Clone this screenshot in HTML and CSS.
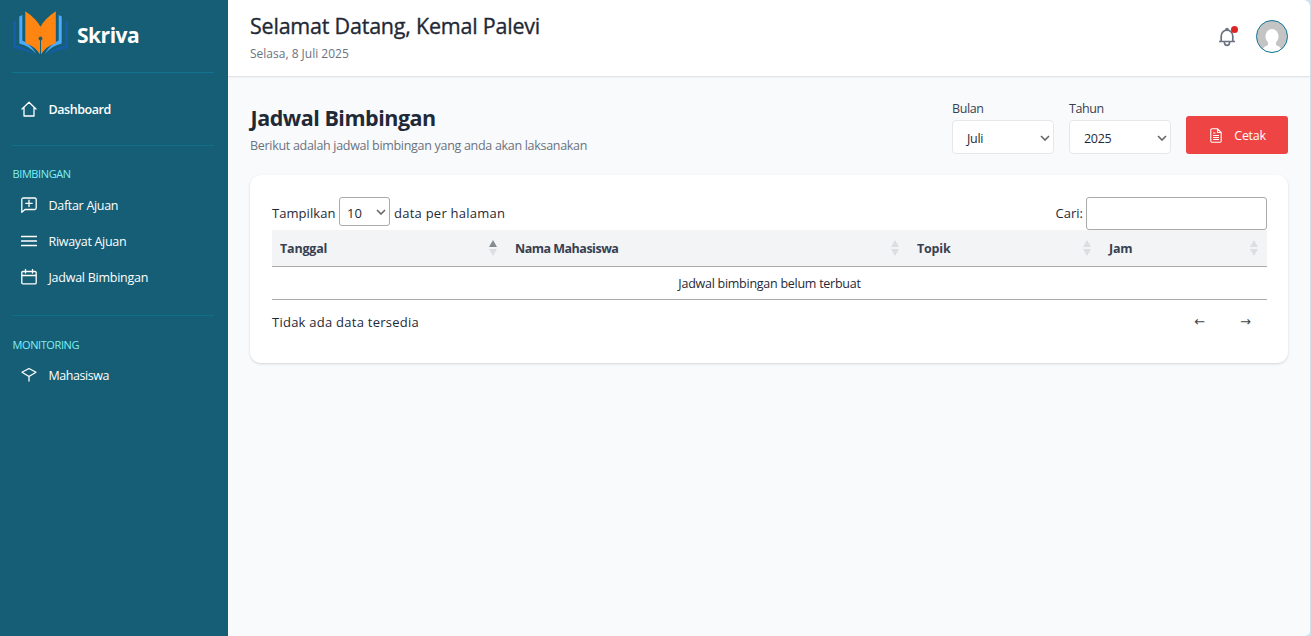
FILE: index.html
```html
<!DOCTYPE html>
<html lang="id">
<head>
<meta charset="utf-8">
<title>Skriva - Jadwal Bimbingan</title>
<link rel="stylesheet" href="styles.css">
</head>
<body>
<div class="app">
  <aside class="sidebar">
    <div class="brand">
      <svg class="logo" width="56" height="48" viewBox="0 0 56 48">
        <path fill="#155da5" d="M0 11h3v24.500q10 1 19 10.500Q12 39.500 0 38.500zM55 11h-3v24.500q-10 1-19 10.500 10-6.500 22-7.500z"/>
        <path fill="#4da9fb" d="M6.300 6.500l3-1.500V30.500q8 3 14 13.500-7.500-8.500-17-10.500zM48.700 6.500l-3-1.500V30.500q-8 3-14 13.500 7.500-8.500 17-10.500z"/>
        <path fill="#ff8512" d="M12.300 1.300Q23 8.500 27.500 16.800 32 8.500 42.800 1.300V33.200Q33 36 27.500 45 22 36 12.300 33.200z"/>
        <circle cx="27.500" cy="28.500" r="1.900" fill="#155e75"/>
        <path d="M27.500 28.500V45" stroke="#155e75" stroke-width="1"/>
      </svg>
      <span class="brand-name">Skriva</span>
    </div>
    <nav class="nav home-nav">
      <a class="nav-item active">
        <svg class="icon" viewBox="0 0 16 16"><path d="M1 8l7-6.800L15 8M3 6.500V15h10V6.500"/></svg>
        <span class="t-dashboard">Dashboard</span>
      </a>
    </nav>
    <nav class="nav group">
      <h3 class="t-bimbingan">BIMBINGAN</h3>
      <a class="nav-item">
        <svg class="icon" viewBox="0 0 16 16"><path d="M.8 15.300V2.500q0-1.500 1.500-1.500h11.400q1.500 0 1.500 1.500v8.500q0 1.500-1.500 1.500H4zM8 3.200v6.300M4.800 6.300h6.400"/></svg>
        <span class="t-daftar">Daftar Ajuan</span>
      </a>
      <a class="nav-item">
        <svg class="icon" viewBox="0 0 16 16"><path d="M.5 3.500h15M.5 8h15M.5 12.500h15"/></svg>
        <span class="t-riwayat">Riwayat Ajuan</span>
      </a>
      <a class="nav-item">
        <svg class="icon" viewBox="0 0 16 16"><path d="M2 2.500h12q1.200 0 1.200 1.200v10q0 1.200-1.200 1.200H2q-1.200 0-1.200-1.200v-10Q.8 2.500 2 2.500zM.8 6.500h14.400M4.500.5v3.500M11.500.5v3.500"/></svg>
        <span class="t-jadwal">Jadwal Bimbingan</span>
      </a>
    </nav>
    <nav class="nav group">
      <h3 class="t-monitoring">MONITORING</h3>
      <a class="nav-item">
        <svg class="icon" viewBox="0 0 16 16"><path d="M8 1.500L15 5.300 8 9.500 1 5.300zM8 9.500V14"/></svg>
        <span class="t-mahasiswa">Mahasiswa</span>
      </a>
    </nav>
  </aside>
  <div class="main">
    <header class="topbar">
      <div>
        <h1><span class="t-welcome">Selamat Datang, Kemal Palevi</span></h1>
        <p class="date"><span class="t-date">Selasa, 8 Juli 2025</span></p>
      </div>
      <div class="user">
        <span class="bell">
          <svg width="18" height="20" viewBox="0 0 18 20" fill="none" stroke="#6b7280" stroke-width="1.700"><path d="M1 14.500h16M3.200 14.500V9a5.800 5.800 0 0 1 11.600 0v5.500M6.500 15v.8a2.500 2.500 0 0 0 5 0V15M8 2.500a1 1 0 0 1 2 0"/></svg>
          <i class="dot"></i>
        </span>
        <svg class="avatar" width="32" height="33" viewBox="0 0 32 33">
          <defs><clipPath id="face"><ellipse cx="16" cy="16.500" rx="15.500" ry="16"/></clipPath></defs>
          <ellipse cx="16" cy="16.500" rx="15.500" ry="16" fill="#c4c4c4"/>
          <g clip-path="url(#face)" fill="#fff"><ellipse cx="16" cy="16.500" rx="6.500" ry="7.500"/><path d="M12 22v3q-6 2-6 8h20q0-6-6-8v-3z"/></g>
          <ellipse cx="16" cy="16.500" rx="15.500" ry="16" fill="none" stroke="#0e7490"/>
        </svg>
      </div>
    </header>
    <main class="content">
      <section class="page-head">
        <div class="page-title">
          <h2><span class="t-title">Jadwal Bimbingan</span></h2>
          <p><span class="t-sub">Berikut adalah jadwal bimbingan yang anda akan laksanakan</span></p>
        </div>
        <div class="filters">
          <label class="field"><span class="t-bulan">Bulan</span>
            <span class="select"><span class="t-juli">Juli</span><svg class="chev" viewBox="0 0 10 6"><path d="M1 1l4 4 4-4"/></svg></span>
          </label>
          <label class="field"><span class="t-tahun">Tahun</span>
            <span class="select"><span class="t-2025">2025</span><svg class="chev" viewBox="0 0 10 6"><path d="M1 1l4 4 4-4"/></svg></span>
          </label>
          <button class="print">
            <svg width="12" height="15" viewBox="0 0 12 15" fill="none" stroke="#fff" stroke-width="1.100"><path d="M7.500.8H2Q.8.800.8 2v11q0 1.200 1.200 1.200h8q1.200 0 1.200-1.200V4.500zM7.500.8v3.700h3.700M3 5h2.500M3 7.500h6M3 9.500h6M3 11.500h6"/></svg>
            <span class="t-cetak">Cetak</span>
          </button>
        </div>
      </section>
      <section class="card">
        <div class="table-tools">
          <div class="length"><span class="t-tampil">Tampilkan</span><span class="select small"><span class="t-10">10</span><svg class="chev" viewBox="0 0 10 6"><path d="M1 1l4 4 4-4"/></svg></span><span class="t-per">data per halaman</span></div>
          <label class="search"><span class="t-cari">Cari:</span><input type="text"></label>
        </div>
        <div class="thead">
          <div class="th"><span class="t-tanggal">Tanggal</span><svg class="sort asc" viewBox="0 0 8 16"><path class="up" d="M4 0l4 7H0z"/><path d="M0 9h8l-4 7z"/></svg></div>
          <div class="th"><span class="t-nama">Nama Mahasiswa</span><svg class="sort" viewBox="0 0 8 16"><path class="up" d="M4 0l4 7H0z"/><path d="M0 9h8l-4 7z"/></svg></div>
          <div class="th"><span class="t-topik">Topik</span><svg class="sort" viewBox="0 0 8 16"><path class="up" d="M4 0l4 7H0z"/><path d="M0 9h8l-4 7z"/></svg></div>
          <div class="th"><span class="t-jam">Jam</span><svg class="sort" viewBox="0 0 8 16"><path class="up" d="M4 0l4 7H0z"/><path d="M0 9h8l-4 7z"/></svg></div>
        </div>
        <div class="empty"><span class="t-empty">Jadwal bimbingan belum terbuat</span></div>
        <div class="table-foot">
          <span class="t-info">Tidak ada data tersedia</span>
          <div class="pager"><span>←</span><span>→</span></div>
        </div>
      </section>
    </main>
  </div>
</div>
</body>
</html>
```
FILE: styles.css
```css
* { box-sizing: border-box; margin: 0; padding: 0; }
body { font-family: "Open Sans", "Noto Sans", sans-serif; font-size: 12.5px; line-height: 20px; color: #1f2937; background: #d3e0ea; white-space: nowrap; }
h1, h2, h3 { font-weight: 400; }
.app { display: flex; width: 1310px; height: 636px; background: #f9fafb; border-radius: 0 7px 5px 0; overflow: hidden; }

.sidebar { width: 228px; flex: none; background: #155e75; color: #fff; padding: 0 14px 0 12px; }
.brand { height: 73px; border-bottom: 1px solid #0e7490; display: flex; gap: 8px; padding: 10px 0 0 1px; }
.brand-name { font-size: 21px; font-weight: 700; line-height: 30px; padding-top: 10px; letter-spacing: -.5px; }
.nav-item { display: flex; align-items: center; gap: 11.5px; height: 36px; padding-left: 9px; }
.nav-item span { padding-top: 2px; }
.active { font-weight: 600; }
.icon { width: 16px; height: 16px; flex: none; fill: none; stroke: #fff; stroke-width: 1.3; stroke-linejoin: round; stroke-linecap: round; }
.home-nav { height: 73px; padding-top: 18px; border-bottom: 1px solid #10708a; }
.group { padding-top: 18px; }
.home-nav + .group { height: 170px; border-bottom: 1px solid #10708a; }
.group h3 { font-size: 11px; line-height: 20px; height: 23px; color: #7ff0f4; padding-left: .5px; }
.group + .group h3 { padding-top: 1px; }
.t-dashboard, .t-mahasiswa { letter-spacing: -.45px; }
.t-daftar, .t-riwayat { letter-spacing: -.3px; }
.t-jadwal { letter-spacing: -.25px; }
.t-bimbingan, .t-monitoring { letter-spacing: -.4px; }

.main { flex: 1; display: flex; flex-direction: column; }
.topbar { height: 77px; background: #fff; border-bottom: 1px solid #e2e5e8; box-shadow: 0 1px 2px rgba(0,0,0,.04); padding: 0 22px; display: flex; justify-content: space-between; }
h1 { font-size: 21.5px; font-weight: 400; line-height: 30px; padding-top: 11px; height: 44px; letter-spacing: -.22px; -webkit-text-stroke: .35px #1f2937; }
.date { color: #6b7280; font-size: 12px; }
.user { display: flex; align-items: flex-start; gap: 20px; padding-top: 20px; }
.bell { position: relative; display: block; margin-top: 7px; height: 20px; }
.dot { position: absolute; left: 13px; top: -1px; width: 7px; height: 7px; border-radius: 50%; background: #dc2626; }

.content { padding: 23px 22px 0; }
.page-head { height: 75px; display: flex; justify-content: space-between; }
.page-title h2 { font-size: 21.5px; font-weight: 700; line-height: 30px; padding-top: 3px; height: 36px; letter-spacing: -.48px; padding-left: .5px; }
.page-title p { color: #6b7280; letter-spacing: -.3px; }
.filters { display: flex; gap: 15px; align-items: flex-start; }
.field { color: #374151; display: block; margin-top: -1px; }
.field > span:first-child { display: block; height: 21px; width: max-content; letter-spacing: -.4px; }
.t-bulan, .t-tahun { letter-spacing: -.4px; }
.select { position: relative; display: flex; align-items: center; width: 102px; height: 34px; border: 1px solid #e5e7eb; border-radius: 4px; background: #fff; padding: 4px 0 0 14px; color: #1f2937; }
.t-juli, .t-2025 { letter-spacing: -.3px; }
.chev { position: absolute; right: 3px; top: 14px; width: 10px; height: 6px; fill: none; stroke: #666; stroke-width: 1.6; }
.print { display: flex; align-items: center; justify-content: center; gap: 12px; width: 102px; height: 38px; margin-top: 16px; padding-left: 2px; border: 0; border-radius: 3px; background: #ef4444; color: #fff; font: inherit; }
.print span { padding-top: 2px; letter-spacing: -.3px; }

.card { height: 188px; border-radius: 11px; background: #fff; padding: 22px 21px 0 22px; box-shadow: 0 1px 3px rgba(0,0,0,.1), 0 1px 2px rgba(0,0,0,.05); }
.table-tools { display: flex; justify-content: space-between; height: 33px; font-size: 13px; }
.length { display: flex; align-items: center; gap: 4px; height: 32px; }
.length > span:not(.select), .t-cari { padding-bottom: 1px; }
.t-tampil { width: 63px; letter-spacing: .06px; }
.t-per, .t-info { letter-spacing: .25px; }
.small { width: 51px; height: 29px; margin-top: -3px; border-color: #aaa; border-radius: 3px; padding: 2px 0 0 7px; }
.small .chev { top: 11px; }
.search { display: flex; align-items: center; gap: 3px; }
.t-cari { margin-top: -1px; }
.search input { width: 181px; height: 33px; border: 1px solid #aaa; border-radius: 3px; background: #fff; }
.thead { display: grid; grid-template-columns: 235px 402px 192px 166px; height: 37px; background: #f3f4f6; border-bottom: 1px solid #aaa; color: #374151; font-weight: 700; }
.th { display: flex; align-items: center; justify-content: space-between; padding: 0 10px 0 8px; }
.th:last-child { padding-right: 9px; }
.th span { padding-top: 2px; letter-spacing: -.2px; }
.th .t-nama { letter-spacing: -.5px; }
.sort { width: 8px; height: 16px; fill: #dcdee1; }
.asc .up { fill: #858a93; }
.empty { height: 33px; line-height: 33px; text-align: center; border-bottom: 1px solid #aaa; letter-spacing: -.26px; }
.table-foot { display: flex; justify-content: space-between; height: 45px; align-items: center; font-size: 13px; }
.t-info { padding-bottom: 2px; }
.pager { display: flex; gap: 35px; padding: 0 16px 2px 0; font-family: "DejaVu Sans", sans-serif; font-size: 13px; color: #444; }
```
